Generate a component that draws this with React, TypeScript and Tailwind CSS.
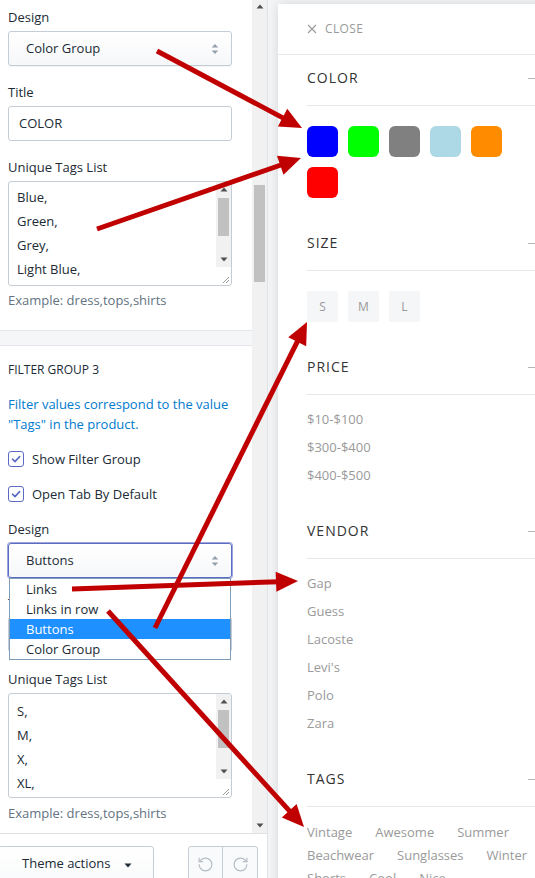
import React from "react";
import { RotateCcw, RotateCw } from "lucide-react";

function SelectArrows() {
  return (
    <svg width="8" height="12" viewBox="0 0 8 12">
      <path d="M4 1 L7.2 4.6 H0.8 Z" fill="#919eab" />
      <path d="M4 11 L7.2 7.4 H0.8 Z" fill="#919eab" />
    </svg>
  );
}

function TriUp() {
  return (
    <svg width="8" height="5" viewBox="0 0 8 5">
      <path d="M4 0.5 L7.5 4.5 H0.5 Z" fill="#505050" />
    </svg>
  );
}
function TriDown() {
  return (
    <svg width="8" height="5" viewBox="0 0 8 5">
      <path d="M4 4.5 L7.5 0.5 H0.5 Z" fill="#505050" />
    </svg>
  );
}

function Select({ value, focused }: { value: string; focused?: boolean }) {
  return (
    <div
      className={
        "h-[35px] w-[224px] rounded-[3px] border bg-gradient-to-b from-white to-[#f6f7f9] flex items-center justify-between pl-[17px] pr-[12px] text-[13px] text-[#212b36] " +
        (focused
          ? "border-[#5c6ac4] shadow-[0_0_0_1px_rgba(92,106,196,0.6)]"
          : "border-[#c4cdd5] shadow-[0_1px_0_rgba(22,29,37,0.05)]")
      }
    >
      <span>{value}</span>
      <SelectArrows />
    </div>
  );
}

function Label({ children, className = "" }: { children: React.ReactNode; className?: string }) {
  return <div className={"h-[20px] leading-[20px] text-[13px] text-[#212b36] mb-[4px] " + className}>{children}</div>;
}

function TextArea({ lines, pt }: { lines: string[]; pt: string }) {
  return (
    <div className="h-[105px] w-[224px] rounded-[3px] border border-[#c4cdd5] bg-white flex overflow-hidden">
      <div className={"flex-1 pl-[8px] text-[13px] leading-[24px] text-[#212b36] overflow-hidden " + pt}>
        {lines.map((l) => (
          <div key={l}>{l}</div>
        ))}
      </div>
      <div className="w-[15px] flex flex-col">
        <div className="bg-[#f1f1f1] flex flex-col">
          <div className="h-[15px] flex items-center justify-center">
            <TriUp />
          </div>
          <div className="h-[55px] px-[2px] pt-[1px]">
            <div className="h-[38px] bg-[#c1c1c1]" />
          </div>
          <div className="h-[15px] flex items-center justify-center">
            <TriDown />
          </div>
        </div>
        <div className="h-[3px]" />
        <div className="h-[15px] flex items-end justify-end">
          <svg width="15" height="15" viewBox="0 0 15 15">
            <line x1="13" y1="7" x2="7" y2="13" stroke="#9a9a9a" strokeWidth="1" />
            <line x1="13" y1="10" x2="10" y2="13" stroke="#9a9a9a" strokeWidth="1" />
          </svg>
        </div>
      </div>
    </div>
  );
}

function Checkbox({ label, className = "" }: { label: string; className?: string }) {
  return (
    <div className={"h-[20px] flex items-center gap-[8px] " + className}>
      <div className="w-[16px] h-[16px] rounded-[3px] border-[1.5px] border-[#5c6ac4] bg-white flex items-center justify-center">
        <svg width="12" height="12" viewBox="0 0 12 12">
          <path d="M2.5 6.2 L5 8.6 L9.6 3.6" fill="none" stroke="#5c6ac4" strokeWidth="1.6" strokeLinecap="round" strokeLinejoin="round" />
        </svg>
      </div>
      <span className="text-[13px] text-[#212b36] leading-[20px]">{label}</span>
    </div>
  );
}

function Example({ className = "" }: { className?: string }) {
  return <div className={"h-[20px] leading-[20px] text-[13px] text-[#637381] " + className}>Example: dress,tops,shirts</div>;
}

function LeftPanel() {
  return (
    <div className="w-[267px] shrink-0 flex flex-col h-[878px] bg-white">
      <div className="h-[833px] flex overflow-hidden">
        <div className="w-[252px] overflow-hidden">
          {/* Card 1 */}
          <div className="pl-[8px] pt-[7px] pb-[20px]">
            <Label>Design</Label>
            <Select value="Color Group" />
            <Label className="mt-[16px]">Title</Label>
            <div className="h-[35px] w-[224px] rounded-[3px] border border-[#c4cdd5] bg-white flex items-center pl-[10px] text-[13px] text-[#212b36]">
              COLOR
            </div>
            <Label className="mt-[16px]">Unique Tags List</Label>
            <TextArea lines={["Blue,", "Green,", "Grey,", "Light Blue,"]} pt="pt-[3px]" />
            <Example className="mt-[4px]" />
          </div>
          <div className="h-[16px] bg-[#f4f6f8] border-t border-b border-[#e3e6ea]" />
          {/* Card 2 */}
          <div className="pl-[8px] pt-[14px]">
            <div className="h-[20px] leading-[20px] text-[12px] text-[#212b36] uppercase">Filter group 3</div>
            <div className="mt-[14px] text-[13px] leading-[20px] text-[#007ace] w-[230px]">
              Filter values correspond to the value "Tags" in the product.
            </div>
            <Checkbox label="Show Filter Group" className="mt-[15px]" />
            <Checkbox label="Open Tab By Default" className="mt-[15px]" />
            <Label className="mt-[15px]">Design</Label>
            <div className="relative">
              <Select value="Buttons" focused />
              <div className="absolute top-[35px] left-[1px] w-[222px] border border-[#7f9db9] bg-white z-10 text-[13px] leading-[20px] text-[#212b36]">
                <div className="pl-[16px]">Links</div>
                <div className="pl-[16px]">Links in row</div>
                <div className="pl-[16px] bg-[#1e90ff] text-white">Buttons</div>
                <div className="pl-[16px]">Color Group</div>
              </div>
            </div>
            <Label className="mt-[15px]">Title</Label>
            <div className="h-[35px] w-[224px] rounded-[3px] border border-[#c4cdd5] bg-white" />
            <Label className="mt-[17px]">Unique Tags List</Label>
            <TextArea lines={["S,", "M,", "X,", "XL,"]} pt="pt-[5px]" />
            <Example className="mt-[5px]" />
          </div>
        </div>
        {/* main scrollbar */}
        <div className="w-[15px] bg-[#f1f1f1] flex flex-col">
          <div className="h-[12px] flex items-center justify-center">
            <TriUp />
          </div>
          <div className="flex-1 px-[2px]">
            <div className="mt-[173px] h-[97px] bg-[#c1c1c1]" />
          </div>
          <div className="h-[15px] flex items-center justify-center">
            <TriDown />
          </div>
        </div>
      </div>
      <div className="h-[45px] border-t border-[#dfe3e8] bg-white pt-[12px] flex items-start">
        <div className="ml-[-2px] w-[156px] h-[36px] rounded-[3px] border border-[#c4cdd5] bg-gradient-to-b from-white to-[#f9fafb] shadow-[0_1px_0_rgba(22,29,37,0.05)] flex items-center pl-[23px] text-[13px] text-[#212b36]">
          <span>Theme actions</span>
          <svg className="ml-[13px] mt-[2px]" width="8" height="5" viewBox="0 0 8 5">
            <path d="M0.5 0.5 H7.5 L4 4.5 Z" fill="#212b36" />
          </svg>
        </div>
        <div className="ml-[34px] w-[70px] h-[36px] rounded-[3px] border border-[#c4cdd5] bg-[#f9fafb] flex">
          <div className="w-[34px] flex items-center justify-center border-r border-[#c4cdd5]">
            <RotateCcw size={17} strokeWidth={1.6} color="#b4bcc4" />
          </div>
          <div className="flex-1 flex items-center justify-center">
            <RotateCw size={17} strokeWidth={1.6} color="#b4bcc4" />
          </div>
        </div>
      </div>
    </div>
  );
}

function SectionHeader({ title }: { title: string }) {
  return (
    <div className="pt-[13px] pb-[17px] border-b border-[#e6e6e6] flex items-center justify-between">
      <span className="h-[20px] leading-[20px] text-[14px] tracking-[1px] text-[#333]">{title}</span>
      <div className="w-[12px] h-[1px] bg-[#b5b5b5]" />
    </div>
  );
}

const swatches = ["#0000ff", "#00ff00", "#808080", "#add8e6", "#ff8c00", "#ff0000"];

function Drawer() {
  return (
    <div className="ml-[10px] mt-[4px] w-[300px] shrink-0 bg-white shadow-[0_0_12px_rgba(0,0,0,0.14)] h-[900px]">
      <div className="h-[51px] border-b border-[#e6e6e6] flex items-center pl-[29px] gap-[8px]">
        <svg width="10" height="10" viewBox="0 0 10 10">
          <path d="M1 1 L9 9 M9 1 L1 9" stroke="#9a9a9a" strokeWidth="1.1" />
        </svg>
        <span className="text-[12px] tracking-[0.4px] text-[#9a9a9a]">CLOSE</span>
      </div>
      <div className="pl-[29px] pr-[38px]">
        <SectionHeader title="COLOR" />
        <div className="pt-[20px] pb-[22px] flex flex-wrap gap-[10px] w-[200px]">
          {swatches.map((c) => (
            <div key={c} className="w-[31px] h-[31px] rounded-[6px]" style={{ backgroundColor: c }} />
          ))}
        </div>
        <SectionHeader title="SIZE" />
        <div className="pt-[20px] pb-[22px] flex gap-[10px]">
          {["S", "M", "L"].map((s) => (
            <div key={s} className="w-[31px] h-[31px] rounded-[2px] bg-[#f5f6f8] flex items-center justify-center text-[12px] text-[#999]">
              {s}
            </div>
          ))}
        </div>
        <SectionHeader title="PRICE" />
        <div className="pt-[10px] pb-[19px] text-[13px] leading-[28px] text-[#9a9a9a]">
          <div>$10-$100</div>
          <div>$300-$400</div>
          <div>$400-$500</div>
        </div>
        <SectionHeader title="VENDOR" />
        <div className="pt-[10px] pb-[19px] text-[13px] leading-[28px] text-[#9a9a9a]">
          {["Gap", "Guess", "Lacoste", "Levi's", "Polo", "Zara"].map((v) => (
            <div key={v}>{v}</div>
          ))}
        </div>
        <SectionHeader title="TAGS" />
        <div className="pt-[14px] flex flex-wrap gap-x-[23px] text-[13px] leading-[23px] text-[#9a9a9a]">
          {["Vintage", "Awesome", "Summer", "Beachwear", "Sunglasses", "Winter", "Shorts", "Cool", "Nice"].map((t) => (
            <span key={t}>{t}</span>
          ))}
        </div>
      </div>
    </div>
  );
}

const arrowData: [number, number, number, number][] = [
  [157, 51, 302, 128],
  [97, 229, 301, 158],
  [155, 628, 307, 322],
  [72, 589, 298, 581],
  [108, 611, 304, 827],
];

function Arrows() {
  return (
    <svg className="absolute left-0 top-0 pointer-events-none z-50" width="535" height="878" viewBox="0 0 535 878">
      {arrowData.map(([x1, y1, x2, y2], i) => {
        const dx = x2 - x1;
        const dy = y2 - y1;
        const len = Math.hypot(dx, dy);
        const ux = dx / len;
        const uy = dy / len;
        const L = 22;
        const W = 10;
        const bx = x2 - ux * L;
        const by = y2 - uy * L;
        const nx = -uy;
        const ny = ux;
        return (
          <g key={i}>
            <line x1={x1} y1={y1} x2={bx + ux * 3} y2={by + uy * 3} stroke="#c00000" strokeWidth={5} />
            <polygon
              points={`${x2},${y2} ${bx + nx * W},${by + ny * W} ${bx - nx * W},${by - ny * W}`}
              fill="#c00000"
            />
          </g>
        );
      })}
    </svg>
  );
}

export default function App() {
  return (
    <div className="relative w-[535px] h-[878px] overflow-hidden flex bg-white font-['Open_Sans',sans-serif]">
      <LeftPanel />
      <div className="flex-1 border-l border-[#dfe3e8] bg-[#f4f6f8] flex overflow-hidden">
        <Drawer />
      </div>
      <Arrows />
    </div>
  );
}
